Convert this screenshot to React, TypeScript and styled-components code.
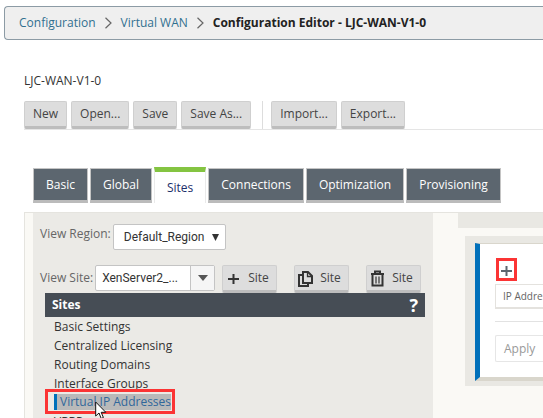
import React from "react";
import styled, { createGlobalStyle, css } from "styled-components";

const GlobalStyle = createGlobalStyle`
  *, *::before, *::after { box-sizing: border-box; }
  body {
    margin: 0;
    overflow: hidden;
    background: #fff;
    color: #333;
    font: 12px/18px "Open Sans", "Noto Sans", sans-serif;
  }
  button, select { font: inherit; color: inherit; margin: 0; }
  a { text-decoration: none; color: inherit; }
`;

const Page = styled.div`
  display: flex;
  flex-direction: column;
  height: 100vh;
  overflow: hidden;
  padding-top: 6px;
  white-space: nowrap;
`;

const Breadcrumb = styled.nav`
  display: flex;
  flex: none;
  align-items: center;
  gap: 9px;
  height: 34px;
  margin-left: 4px;
  padding-left: 14px;
  border: 1px solid #8c9ba5;
  border-right: 0;
  border-radius: 4px 0 0 4px;
  background: #efefef;
`;

const Crumb = styled.a`
  color: #31708f;
`;

const CurrentCrumb = styled.span`
  color: #222;
  font-weight: 700;
`;

const Title = styled.h1`
  flex: none;
  margin: 32px 0 11px 24px;
  font-size: 12px;
  font-weight: 400;
  line-height: 18px;
`;

const Toolbar = styled.div`
  display: flex;
  flex: none;
  gap: 4px;
  margin-left: 24px;
  border-bottom: 1px solid #e5e5e5;
`;

const Divider = styled.span`
  width: 1px;
  margin: 0 4px 0 7px;
  background: #ddd;
`;

const Button = styled.button<{ $icon?: boolean }>`
  display: flex;
  flex: none;
  align-items: center;
  gap: 7px;
  height: 28px;
  padding: 0 8px;
  border: 1px solid #cfcfcf;
  border-bottom: 3px solid #bdbdbd;
  border-radius: 2px;
  background: #ddd;
  color: #444;
  ${(p) => p.$icon && css`width: 55px; padding: 0 0 0 3px;`}
`;

const Tabs = styled.div`
  display: flex;
  flex: none;
  align-items: flex-end;
  gap: 2px;
  margin: 37px 0 9px 33px;
`;

const Tab = styled.button<{ $active?: boolean }>`
  flex: none;
  height: 35px;
  padding: 0 12px;
  border: 1px solid #c4c4c4;
  border-bottom: 3px solid #bbb;
  background: #5c666f;
  color: #fff;
  font-weight: 500;
  ${(p) =>
    p.$active &&
    css`
      height: 36px;
      border: 1px solid #eaeaea;
      border-top: 5px solid #84c441;
      border-bottom: 0;
      background: #fff;
      color: #1c2f6b;
      font-weight: 400;
    `}
`;

const Workspace = styled.main`
  display: flex;
  flex: 1;
  min-height: 0;
  margin-left: 24px;
  padding-left: 8px;
  border: solid #e5e4df;
  border-width: 1px 0 0 1px;
  background: #faf9f5;
`;

const Sidebar = styled.section`
  flex: none;
  width: 400px;
  padding: 11px 8px 0 7px;
  background: #ebeae6;
`;

const Field = styled.div<{ $tall?: boolean }>`
  display: flex;
  align-items: flex-start;
  gap: 2px;
  height: ${(p) => (p.$tall ? 41 : 28)}px;
`;

const Label = styled.label`
  color: #666;
  line-height: 20px;
`;

const SiteLabel = styled(Label)`
  line-height: 26px;
`;

const SelectBox = styled.span<{ $split?: boolean }>`
  display: grid;
  flex: none;
  grid-template-columns: 1fr ${(p) => (p.$split ? 24 : 13)}px;
  align-items: center;
  width: ${(p) => (p.$split ? 120 : 113)}px;
  height: 26px;
  border: 1px solid #c4c4c4;
  border-radius: 2px;
  background: #fff;
`;

const Select = styled.select<{ $inset: number }>`
  grid-area: 1 / 1 / 2 / 3;
  height: 24px;
  padding: 0 0 0 ${(p) => p.$inset}px;
  border: 0;
  background: transparent;
  appearance: none;
  color: #333;
  font-family: Roboto, sans-serif;
  font-size: 12px;
`;

const Arrow = styled.span<{ $split?: boolean }>`
  grid-area: 1 / 2 / 2 / 3;
  display: flex;
  align-items: center;
  height: 24px;
  pointer-events: none;
  ${(p) => p.$split && css`
    justify-content: center;
    border-left: 1px solid #c4c4c4;
    background: #f5f5f5;
  `}
`;

const SiteActions = styled.div`
  display: flex;
  flex: none;
  gap: 17px;
  margin-left: 5px;
`;

const MenuHeader = styled.header`
  display: flex;
  align-items: center;
  justify-content: space-between;
  height: 24px;
  margin-left: 5px;
  padding: 0 7px;
  background: #464d55;
  color: #fff;
`;

const MenuTitle = styled.h2`
  margin: 0;
  font-size: 12px;
  font-weight: 700;
`;

const Help = styled.button`
  padding: 0;
  border: 0;
  background: none;
  color: #fff;
  font-size: 18px;
  font-weight: 700;
`;

const Menu = styled.ul`
  margin: 0 0 0 14px;
  padding: 0;
  list-style: none;
`;

const MenuItem = styled.li`
  position: relative;
  height: 19px;
  line-height: 19px;
`;

const MenuLink = styled.a<{ $selected?: boolean }>`
  ${(p) =>
    p.$selected &&
    css`
      display: inline-block;
      height: 16px;
      margin-top: 1px;
      padding-left: 3px;
      border-left: 3px solid #0070ba;
      background: #b9b9b9;
      color: #31679b;
      line-height: 16px;
      vertical-align: top;
    `}
`;

const MenuMark = styled.span`
  position: absolute;
  top: -4px;
  left: -9px;
  width: 130px;
  height: 25px;
  border: 3px solid #fb3434;
`;

const Pointer = styled.svg`
  position: absolute;
  top: 8px;
  left: 41px;
`;

const Content = styled.section`
  flex: 1;
  min-width: 0;
  overflow: hidden;
  margin-left: 25px;
`;

const Strip = styled.div`
  height: 15px;
  margin-bottom: 8px;
  background: #e9e8e3;
`;

const Frame = styled.div`
  margin-left: 7px;
  padding: 7px 0 5px 10px;
  background: #e9e8e3;
`;

const Card = styled.div`
  padding: 14px 0 15px 15px;
  border: solid #d9d6cc;
  border-width: 1px 0 4px;
  border-left: 5px solid #0070ba;
  background: #fff;
`;

const AddButton = styled.button`
  display: grid;
  place-items: center;
  width: 21px;
  height: 23px;
  margin: 0 0 3px 1px;
  padding: 2px 0 0;
  border: 3px solid #fb3434;
  background: #fff;
`;

const Table = styled.table`
  width: 100%;
  border-spacing: 0;
  border: solid #e4e2de;
  border-width: 1px 0 2px 1px;
`;

const HeadCell = styled.th`
  height: 22px;
  padding: 0 0 0 7px;
  color: #666;
  font-size: 10px;
  font-weight: 400;
  line-height: 14px;
  text-align: left;
`;

const Rule = styled.hr`
  margin: 12px 0 13px;
  border: 0;
  border-top: 1px solid #e2e2e2;
`;

const Apply = styled.button`
  display: block;
  width: 100%;
  height: 27px;
  padding: 0 8px;
  border: 1px solid #e6e6e6;
  border-right: 0;
  border-radius: 2px 0 0 2px;
  background: #fff;
  color: #999;
  text-align: left;
`;

const Chevron = () => (
  <svg width="7" height="12" viewBox="0 0 7 12" fill="none" stroke="#666" strokeWidth="1.2" aria-hidden="true">
    <path d="M.5 .8 6 6 .5 11.2" />
  </svg>
);

const Plus = ({ color }: { color: string }) => (
  <svg width="15" height="15" viewBox="0 0 15 15" stroke={color} strokeWidth="2" aria-hidden="true">
    <path d="M2 8h11M7.500 3v10" />
  </svg>
);

const Copy = () => (
  <svg width="15" height="17" viewBox="0 0 15 17" fill="none" stroke="#333" strokeWidth="2" aria-hidden="true">
    <path d="M5 2h5l4 4v7H5z" />
    <path d="M9.500 2v4.500H14" strokeWidth="1.300" />
    <path d="M4 5H1v11h9v-2" />
  </svg>
);

const Trash = () => (
  <svg width="15" height="17" viewBox="0 0 15 17" fill="none" stroke="#333" strokeWidth="2" aria-hidden="true">
    <path d="M1 4h13M5 3.500V1.500h5v2M2.500 5v10.500h10V5" />
    <path d="M6 6.500v7M9 6.500v7" strokeWidth="1.200" />
  </svg>
);

const menuItems = [
  "Basic Settings",
  "Centralized Licensing",
  "Routing Domains",
  "Interface Groups",
  "Virtual IP Addresses",
  "VRRP",
];
const selectedItem = "Virtual IP Addresses";
const tabs = ["Basic", "Global", "Sites", "Connections", "Optimization", "Provisioning"];

export default function App() {
  return (
    <Page>
      <GlobalStyle />
      <Breadcrumb aria-label="Breadcrumb">
        <Crumb href="#configuration">Configuration</Crumb>
        <Chevron />
        <Crumb href="#virtual-wan">Virtual WAN</Crumb>
        <Chevron />
        <CurrentCrumb>Configuration Editor - LJC-WAN-V1-0</CurrentCrumb>
      </Breadcrumb>
      <Title>LJC-WAN-V1-0</Title>
      <Toolbar>
        <Button>New</Button>
        <Button>Open...</Button>
        <Button>Save</Button>
        <Button>Save As...</Button>
        <Divider />
        <Button>Import...</Button>
        <Button>Export...</Button>
      </Toolbar>
      <Tabs role="tablist">
        {tabs.map((t) => (
          <Tab key={t} role="tab" aria-selected={t === "Sites"} $active={t === "Sites"}>
            {t}
          </Tab>
        ))}
      </Tabs>
      <Workspace>
        <Sidebar>
          <Field $tall>
            <Label htmlFor="region">View Region:</Label>
            <SelectBox>
              <Select id="region" $inset={10}>
                <option>Default_Region</option>
              </Select>
              <Arrow>
                <svg width="7" height="7" viewBox="0 0 7 7" aria-hidden="true">
                  <path d="M0 0h7L3.500 7z" fill="#333" />
                </svg>
              </Arrow>
            </SelectBox>
          </Field>
          <Field>
            <SiteLabel htmlFor="site">View Site:</SiteLabel>
            <SelectBox $split>
              <Select id="site" $inset={6}>
                <option>XenServer2_...</option>
              </Select>
              <Arrow $split>
                <svg width="10" height="6" viewBox="0 0 10 6" aria-hidden="true">
                  <path d="M0 0h10L5 6z" fill="#555" />
                </svg>
              </Arrow>
            </SelectBox>
            <SiteActions>
              <Button $icon aria-label="Add Site"><Plus color="#333" />Site</Button>
              <Button $icon aria-label="Copy Site"><Copy />Site</Button>
              <Button $icon aria-label="Delete Site"><Trash />Site</Button>
            </SiteActions>
          </Field>
          <MenuHeader>
            <MenuTitle>Sites</MenuTitle>
            <Help aria-label="Help">?</Help>
          </MenuHeader>
          <Menu>
            {menuItems.map((item) => (
              <MenuItem key={item}>
                <MenuLink href="#sites" $selected={item === selectedItem}>{item}</MenuLink>
                {item === selectedItem && (
                  <>
                    <MenuMark />
                    <Pointer width="12" height="19" viewBox="0 0 12 19" aria-hidden="true">
                      <path
                        d="M.7 1v14l3.300-3 2.200 5.500 2.200-1L6.200 11.300h4.600z"
                        fill="#fff"
                        stroke="#111"
                      />
                    </Pointer>
                  </>
                )}
              </MenuItem>
            ))}
          </Menu>
        </Sidebar>
        <Content>
          <Strip />
          <Frame>
            <Card>
              <AddButton aria-label="Add address"><Plus color="#5c666f" /></AddButton>
              <Table>
                <thead>
                  <tr><HeadCell scope="col">IP Address</HeadCell></tr>
                </thead>
              </Table>
              <Rule />
              <Apply>Apply</Apply>
            </Card>
          </Frame>
        </Content>
      </Workspace>
    </Page>
  );
}
